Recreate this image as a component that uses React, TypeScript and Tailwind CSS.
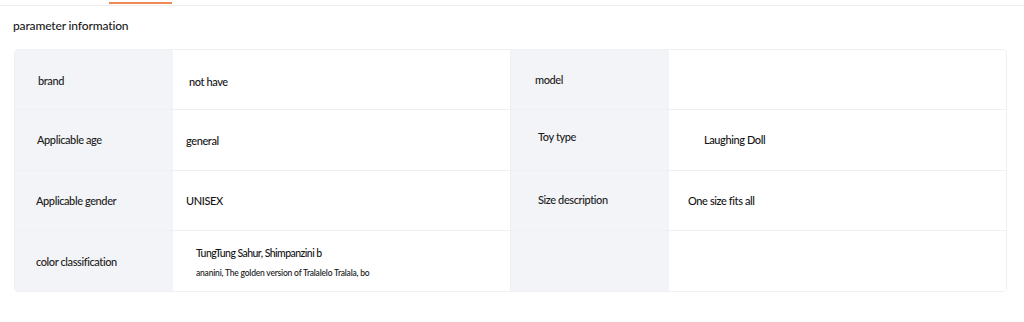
import React from "react";

interface Cell {
  label: string;
  value: React.ReactNode;
  labelCls?: string;
  valueCls?: string;
}

const rows: [Cell, Cell][] = [
  [
    { label: "brand", value: "not have", labelCls: "pl-[23px] pt-[3px]", valueCls: "pl-[16px] pt-[5px]" },
    { label: "model", value: "", labelCls: "pl-[24px] pt-[1px]" },
  ],
  [
    { label: "Applicable age", value: "general", labelCls: "pl-[22px] pt-[1px]", valueCls: "pl-[13px] pt-[2px]" },
    { label: "Toy type", value: "Laughing Doll", labelCls: "pl-[27px] pb-[6px]", valueCls: "pl-[35px] pt-[1px]" },
  ],
  [
    { label: "Applicable gender", value: "UNISEX", labelCls: "pl-[21px] pt-[2px]", valueCls: "pl-[13px] pt-[2px]" },
    { label: "Size description", value: "One size fits all", labelCls: "pl-[27px] pt-[1px]", valueCls: "pl-[19px] pt-[2px]" },
  ],
  [
    {
      label: "color classification",
      value: (
        <div className="flex flex-col gap-[8px] pt-[2px]">
          <span className="text-[10.5px] leading-[14px] tracking-[-0.55px] text-[#141414]">TungTung Sahur, Shimpanzini b</span>
          <span className="text-[8.5px] leading-[10px] tracking-[-0.2px] text-[#141414]">ananini, The golden version of Tralalelo Tralala, bo</span>
        </div>
      ),
      labelCls: "pl-[21px] pt-[3px]",
      valueCls: "pl-[23px]",
    },
    { label: "", value: "" },
  ],
];

export default function App() {
  return (
    <div className="w-[1024px] h-[322px] bg-white overflow-hidden font-medium" style={{ fontFamily: "Lato, 'Noto Sans', sans-serif" }}>
      <div className="relative h-[6px] border-b border-[#eeeeee]">
        <div className="absolute left-[109px] top-[2px] w-[63px] h-[2px] bg-[#ee8a54]" />
      </div>
      <div className="pl-[13px] pt-[12px] pb-[15px] text-[12px] leading-[16px] tracking-[-0.15px] text-[#1a1a1a]">
        parameter information
      </div>
      <div className="ml-[14px] w-[993px] border border-[#f0f0f2] rounded-[4px] overflow-hidden">
        {rows.map((row, i) => (
          <div
            key={i}
            className={`grid grid-cols-[158px_338px_158px_1fr] h-[60.25px] ${i < rows.length - 1 ? "border-b border-[#f0f0f2]" : ""}`}
          >
            {row.map((cell, j) => (
              <React.Fragment key={j}>
                <div className={`flex items-center bg-[#f3f4f7] text-[11px] tracking-[-0.4px] text-[#1c1c1c] ${cell.labelCls ?? ""}`}>
                  {cell.label}
                </div>
                <div
                  className={`flex items-center bg-white text-[11px] tracking-[-0.4px] text-[#141414] ${j === 0 ? "border-r border-[#f0f0f2]" : ""} ${cell.valueCls ?? ""}`}
                >
                  {cell.value}
                </div>
              </React.Fragment>
            ))}
          </div>
        ))}
      </div>
    </div>
  );
}
